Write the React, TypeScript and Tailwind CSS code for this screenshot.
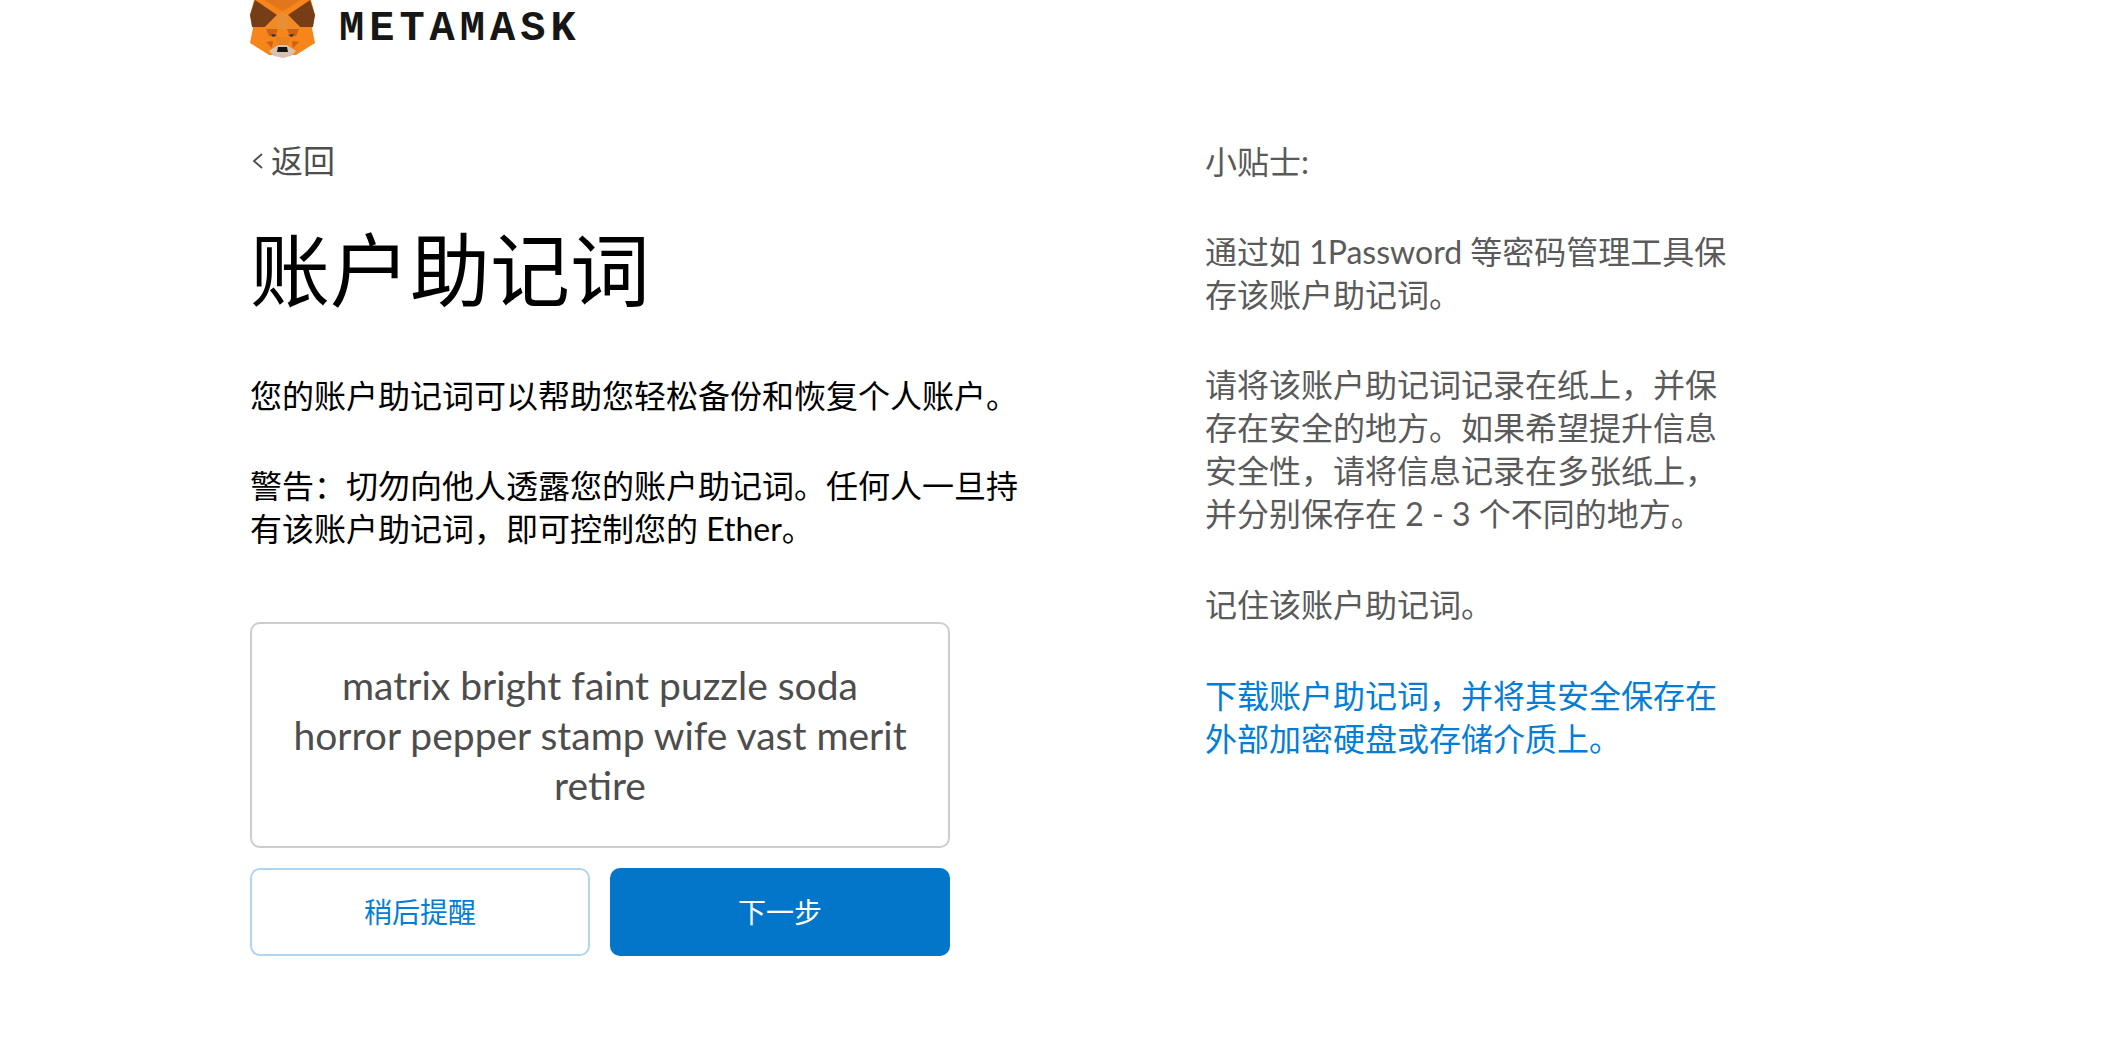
const latin = "font-['Lato','Noto_Sans_CJK_SC',sans-serif]";

function FoxLogo() {
  return (
    <svg viewBox="0 0 65 58" className="h-[58px] w-[65px] shrink-0">
      {/* head */}
      <polygon points="4,0 61,0 65,15 62,28 65,43 46,55 19,55 0,43 3,28 0,15" fill="#f6851b" />
      <polygon points="14,0 51,0 33,11 32,11" fill="#e2761b" />
      {/* ears */}
      <polygon points="5,0 27,15 15,27 2,27 0,15" fill="#763d16" />
      <polygon points="60,0 38,15 50,27 63,27 65,15" fill="#763d16" />
      {/* face shading */}
      <polygon points="27,15 33,12 38,15 38,29 27,29" fill="#e88f35" />
      <polygon points="15,27 27,15 27,29 16,29" fill="#ef8a25" />
      <polygon points="50,27 38,15 38,29 49,29" fill="#ef8a25" />
      <polygon points="16,29 28,29 25,37 19,36" fill="#cd6116" />
      <polygon points="49,29 37,29 40,37 46,36" fill="#cd6116" />
      <polygon points="21,34 27,35 23,37" fill="#233447" />
      <polygon points="44,34 38,35 42,37" fill="#233447" />
      <polygon points="16,42 23,41 22,48" fill="#cd6116" />
      <polygon points="49,42 42,41 43,48" fill="#cd6116" />
      <polygon points="25,37 40,37 37,47 28,47" fill="#e8821e" />
      {/* muzzle */}
      <polygon points="28,45 37,45 46,51 41,56 33,58 24,56 19,51" fill="#d7c1b3" />
      <polygon points="28,47 37,47 38,52 27,52" fill="#161616" />
    </svg>
  );
}

export default function App() {
  return (
    <div className={`min-h-[1038px] bg-white pl-[250px] ${latin}`}>
      {/* Header */}
      <div className="flex h-[58px] items-center gap-[24px]">
        <FoxLogo />
        <span className="font-['Liberation_Mono',monospace] text-[42px] font-bold leading-none tracking-[5px] text-[#161616]">
          METAMASK
        </span>
      </div>

      <div className="flex pt-[79px]">
        {/* Left column */}
        <div className="w-[700px] shrink-0">
          <div className="flex items-center gap-[8px] text-[32px] leading-[48px] text-[#4d4d4d]">
            <svg viewBox="0 0 11 16" className="ml-[2px] h-4 w-[11px]" fill="none" stroke="#4d4d4d" strokeWidth="1.8">
              <path d="M10 1 L2 8 L10 15" />
            </svg>
            <span>返回</span>
          </div>
          <h1 className="mt-[26px] text-[80px] font-normal leading-[116px] text-black">账户助记词</h1>
          <p className="mt-[47px] w-[780px] text-[32px] leading-[43px] text-black">
            您的账户助记词可以帮助您轻松备份和恢复个人账户。
          </p>
          <p className="mt-[47px] w-[780px] text-[32px] leading-[43px] text-black">
            警告：切勿向他人透露您的账户助记词。任何人一旦持有该账户助记词，即可控制您的 Ether。
          </p>
          <div className="mt-[72px] flex h-[226px] w-[700px] items-center justify-center rounded-[10px] border-2 border-[#cdcdcd] px-[40px] text-center text-[39px] leading-[50px] text-[#4d4d4d]">
            matrix bright faint puzzle soda horror pepper stamp wife vast merit retire
          </div>
          <div className="mt-[20px] flex w-[700px] gap-[20px]">
            <button className="h-[88px] w-[340px] flex-none rounded-[10px] border-2 border-[#afd5f1] bg-white text-[28px] text-[#037dd6]">
              稍后提醒
            </button>
            <button className="h-[88px] w-[340px] flex-none rounded-[10px] bg-[#0376c9] text-[28px] text-white">
              下一步
            </button>
          </div>
        </div>

        {/* Tips column */}
        <div className="ml-[255px] w-[530px] text-[32px] leading-[43px] text-[#5a5a5a]">
          <p className="pt-[3px]">小贴士:</p>
          <p className="mt-[47px]">通过如 1Password 等密码管理工具保存该账户助记词。</p>
          <p className="mt-[47px]">
            请将该账户助记词记录在纸上，并保存在安全的地方。如果希望提升信息安全性，请将信息记录在多张纸上，并分别保存在 2 - 3 个不同的地方。
          </p>
          <p className="mt-[48px]">记住该账户助记词。</p>
          <p className="mt-[48px] text-[#037dd6]">下载账户助记词，并将其安全保存在外部加密硬盘或存储介质上。</p>
        </div>
      </div>
    </div>
  );
}
